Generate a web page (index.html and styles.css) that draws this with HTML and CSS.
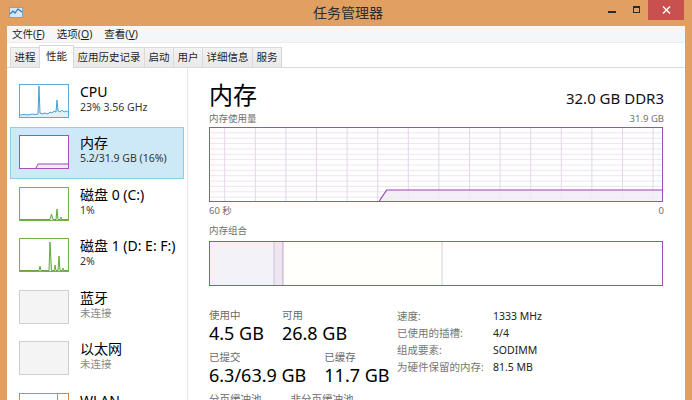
FILE: index.html
```html
<!DOCTYPE html>
<html lang="zh-CN">
<head>
    <meta charset="UTF-8">
    <title>任务管理器</title>
    <link rel="stylesheet" href="styles.css">
</head>
<body>
<div class="window">
    <div class="titlebar">
        <svg class="app-icon" width="14" height="11" viewBox="0 0 14 11">
            <rect x="0.5" y="0.5" width="13" height="10" fill="#d6e8f4" stroke="#7aa6c8"/>
            <polyline points="1,7 4,4 6,6 9,2 13,5" fill="none" stroke="#2f77b0" stroke-width="1.2"/>
        </svg>
        <div class="title">任务管理器</div>
        <div class="caption">
            <span class="cap-btn"><i class="min"></i></span>
            <span class="cap-btn"><i class="max"></i></span>
            <span class="cap-btn close">
                <svg width="9" height="8" viewBox="0 0 9 8"><path d="M1 0.5 L8 7.5 M8 0.5 L1 7.5" stroke="#fff" stroke-width="1.4"/></svg>
            </span>
        </div>
    </div>

    <div class="client">
        <div class="menubar">
            <span>文件(<u>F</u>)</span>
            <span>选项(<u>O</u>)</span>
            <span>查看(<u>V</u>)</span>
        </div>
        <div class="tabs">
            <span class="tab">进程</span>
            <span class="tab active">性能</span>
            <span class="tab">应用历史记录</span>
            <span class="tab">启动</span>
            <span class="tab">用户</span>
            <span class="tab">详细信息</span>
            <span class="tab">服务</span>
        </div>

        <div class="main">
            <!-- 左侧资源列表 -->
            <div class="sidebar">
                <div class="item">
                    <div class="thumb cpu">
                        <svg width="48" height="32" viewBox="0 0 48 32">
                            <polygon points="0,30 4,29.5 8,30 12,29 16,29.5 18,29 19,1 20,28 22,29 25,28 28,29 30,27 32,28 34,26 36,27 37,15 38,26 40,27 42,25 44,27 46,26 48,27 48,32 0,32" fill="#e4f0f8"/>
                            <polyline points="0,30 4,29.5 8,30 12,29 16,29.5 18,29 19,1 20,28 22,29 25,28 28,29 30,27 32,28 34,26 36,27 37,15 38,26 40,27 42,25 44,27 46,26 48,27" fill="none" stroke="#4a9fd4" stroke-width="1"/>
                        </svg>
                    </div>
                    <div class="info">
                        <div class="name">CPU</div>
                        <div class="sub">23% 3.56 GHz</div>
                    </div>
                </div>
                <div class="item selected">
                    <div class="thumb mem">
                        <svg width="48" height="32" viewBox="0 0 48 32">
                            <polygon points="16,32 18,28 48,28 48,32" fill="#f3e9f6"/>
                            <polyline points="16,32 18,28 48,28" fill="none" stroke="#9b45b5" stroke-width="1"/>
                        </svg>
                    </div>
                    <div class="info">
                        <div class="name">内存</div>
                        <div class="sub">5.2/31.9 GB (16%)</div>
                    </div>
                </div>
                <div class="item">
                    <div class="thumb disk">
                        <svg width="48" height="32" viewBox="0 0 48 32">
                            <polygon points="0,32 30,32 31.5,26 33,32 36,32 37,21 38,32 40.5,32 41,29 41.5,32" fill="#e6f2dc"/>
                            <polyline points="0,31.5 30,31.5 31.5,26 33,31.5 36,31.5 37,21 38,31.5 40.5,31.5 41,29 41.5,31.5 48,31.5" fill="none" stroke="#62a83a" stroke-width="1"/>
                        </svg>
                    </div>
                    <div class="info">
                        <div class="name">磁盘 0 (C:)</div>
                        <div class="sub">1%</div>
                    </div>
                </div>
                <div class="item">
                    <div class="thumb disk">
                        <svg width="48" height="32" viewBox="0 0 48 32">
                            <polygon points="0,32 19,32 20,27 21,32 29,32 30,3 31.5,32 34.5,32 35,26 36,32 38,32 39,17 40,32 42.5,32 43,29 43.5,32" fill="#e6f2dc"/>
                            <polyline points="0,31.5 19,31.5 20,27 21,31.5 29,31.5 30,3 31.5,31.5 34.5,31.5 35,26 36,31.5 38,31.5 39,17 40,31.5 42.5,31.5 43,29 43.5,31.5 48,31.5" fill="none" stroke="#62a83a" stroke-width="1"/>
                        </svg>
                    </div>
                    <div class="info">
                        <div class="name">磁盘 1 (D: E: F:)</div>
                        <div class="sub">2%</div>
                    </div>
                </div>
                <div class="item">
                    <div class="thumb idle"></div>
                    <div class="info">
                        <div class="name">蓝牙</div>
                        <div class="sub off">未连接</div>
                    </div>
                </div>
                <div class="item">
                    <div class="thumb idle"></div>
                    <div class="info">
                        <div class="name">以太网</div>
                        <div class="sub off">未连接</div>
                    </div>
                </div>
                <div class="item">
                    <div class="thumb wlan"><i></i></div>
                    <div class="info">
                        <div class="name">WLAN</div>
                    </div>
                </div>
            </div>

            <!-- 右侧详情 -->
            <div class="detail">
                <div class="head">
                    <h1>内存</h1>
                    <div class="spec">32.0 GB DDR3</div>
                </div>
                <div class="cap">
                    <span>内存使用量</span>
                    <span>31.9 GB</span>
                </div>
                <svg class="graph" width="454" height="75" viewBox="0 0 454 75">
                    <g stroke="#efe3f2" stroke-width="1">
                        <line x1="0" y1="5.86" x2="454" y2="5.86"/>
                        <line x1="0" y1="11.2" x2="454" y2="11.2"/>
                        <line x1="0" y1="16.57" x2="454" y2="16.57"/>
                        <line x1="0" y1="21.93" x2="454" y2="21.93"/>
                        <line x1="0" y1="27.29" x2="454" y2="27.29"/>
                        <line x1="0" y1="32.64" x2="454" y2="32.64"/>
                        <line x1="0" y1="38" x2="454" y2="38"/>
                        <line x1="0" y1="43.36" x2="454" y2="43.36"/>
                        <line x1="0" y1="48.71" x2="454" y2="48.71"/>
                        <line x1="0" y1="54.07" x2="454" y2="54.07"/>
                        <line x1="0" y1="59.43" x2="454" y2="59.43"/>
                        <line x1="0" y1="64.79" x2="454" y2="64.79"/>
                        <line x1="0" y1="70.14" x2="454" y2="70.14"/>
                    </g>
                    <g stroke="#e4d5ea" stroke-width="1">
                        <line x1="15.7" y1="0" x2="15.7" y2="75"/>
                        <line x1="46.3" y1="0" x2="46.3" y2="75"/>
                        <line x1="76.9" y1="0" x2="76.9" y2="75"/>
                        <line x1="107.5" y1="0" x2="107.5" y2="75"/>
                        <line x1="138.1" y1="0" x2="138.1" y2="75"/>
                        <line x1="168.7" y1="0" x2="168.7" y2="75"/>
                        <line x1="199.3" y1="0" x2="199.3" y2="75"/>
                        <line x1="229.9" y1="0" x2="229.9" y2="75"/>
                        <line x1="260.5" y1="0" x2="260.5" y2="75"/>
                        <line x1="291.1" y1="0" x2="291.1" y2="75"/>
                        <line x1="321.7" y1="0" x2="321.7" y2="75"/>
                        <line x1="352.3" y1="0" x2="352.3" y2="75"/>
                        <line x1="382.9" y1="0" x2="382.9" y2="75"/>
                        <line x1="413.5" y1="0" x2="413.5" y2="75"/>
                        <line x1="444.1" y1="0" x2="444.1" y2="75"/>
                    </g>
                    <polygon points="170,74.5 177.7,63 453.5,63 453.5,74.5" fill="#f2ebf5" fill-opacity="0.85"/>
                    <polyline points="170,74.5 177.7,63 453.5,63" fill="none" stroke="#9445ad" stroke-width="1.2"/>
                    <rect x="0.5" y="0.5" width="453" height="74" fill="none" stroke="#9b50b4" stroke-width="1"/>
                </svg>
                <div class="cap axis">
                    <span>60 秒</span>
                    <span>0</span>
                </div>
                <div class="cap combo-cap">
                    <span>内存组合</span>
                </div>
                <svg class="combo" width="454" height="45" viewBox="0 0 454 45">
                    <rect x="0" y="0" width="65" height="45" fill="#f3f2f8"/>
                    <rect x="65" y="0" width="9" height="45" fill="#ede5f1"/>
                    <rect x="74" y="0" width="159" height="45" fill="#fffffb"/>
                    <line x1="65" y1="0" x2="65" y2="45" stroke="#cbc2d3"/>
                    <line x1="74" y1="0" x2="74" y2="45" stroke="#c2a3cf"/>
                    <line x1="233" y1="0" x2="233" y2="45" stroke="#d2d2d2"/>
                    <rect x="0.5" y="0.5" width="453" height="44" fill="none" stroke="#9b50b4" stroke-width="1"/>
                </svg>

                <div class="stats">
                    <div class="figures">
                        <div class="fig-row">
                            <div class="fig"><div class="label">使用中</div><div class="value">4.5 GB</div></div>
                            <div class="fig"><div class="label">可用</div><div class="value">26.8 GB</div></div>
                        </div>
                        <div class="fig-row">
                            <div class="fig"><div class="label">已提交</div><div class="value">6.3/63.9 GB</div></div>
                            <div class="fig"><div class="label">已缓存</div><div class="value">11.7 GB</div></div>
                        </div>
                        <div class="fig-row">
                            <div class="fig"><div class="label">分页缓冲池</div><div class="value">423 MB</div></div>
                            <div class="fig"><div class="label">非分页缓冲池</div><div class="value">143 MB</div></div>
                        </div>
                    </div>
                    <div class="props">
                        <span class="k">速度:</span><span class="v">1333 MHz</span>
                        <span class="k">已使用的插槽:</span><span class="v">4/4</span>
                        <span class="k">组成要素:</span><span class="v">SODIMM</span>
                        <span class="k">为硬件保留的内存:</span><span class="v">81.5 MB</span>
                    </div>
                </div>
            </div>
        </div>
    </div>
</div>
</body>
</html>
```

FILE: styles.css
```css
html, body {
    margin: 0;
    height: 100%;
    overflow: hidden;
}
body {
    font-family: "Noto Sans", "Noto Sans CJK SC", sans-serif;
    color: #000;
    background: #e1a062;
}
.window {
    width: 692px;
    height: 400px;
    background: #e1a062;
    display: flex;
    flex-direction: column;
    overflow: hidden;
}

/* 标题栏 */
.titlebar {
    height: 26px;
    display: grid;
    grid-template-columns: 1fr auto 1fr;
    align-items: start;
    flex: none;
}
.app-icon { margin: 7px 0 0 9px; }
.title {
    font-size: 14px;
    line-height: 26px;
    color: #2d2d2d;
    padding-left: 4px;
}
.caption {
    justify-self: end;
    display: flex;
    margin-right: 8px;
}
.cap-btn {
    width: 24px;
    height: 20px;
    display: flex;
    align-items: center;
    justify-content: center;
}
.cap-btn .min {
    width: 8px;
    height: 2px;
    background: #2a2a2a;
    margin-top: 3px;
}
.cap-btn .max {
    width: 5px;
    height: 4px;
    border: 1px solid #2a2a2a;
    border-top-width: 2px;
    margin-top: -2px;
}
.cap-btn.close {
    width: 36px;
    background: #c8504f;
}

/* 客户区 */
.client {
    flex: 1;
    margin: 0 7px;
    background: #fff;
    display: flex;
    flex-direction: column;
    min-height: 0;
}
.menubar {
    height: 16px;
    background: #f5f6f7;
    border-bottom: 1px solid #e9ebee;
    display: flex;
    gap: 12px;
    padding-left: 5px;
    font-size: 10.5px;
    line-height: 16px;
    color: #1e1e1e;
}
.menubar u { text-decoration-thickness: 1px; text-underline-offset: 1px; }
.tabs {
    height: 24px;
    border-bottom: 1px solid #d9d9d9;
    display: flex;
    align-items: flex-end;
    padding-left: 3px;
}
.tab {
    height: 19px;
    padding: 0 3.5px;
    margin-left: -1px;
    border: 1px solid #d9d9d9;
    border-bottom: none;
    background: linear-gradient(#f3f3f3, #e9e9e9);
    font-size: 10.5px;
    line-height: 19px;
    color: #1e1e1e;
}
.tab:first-child { margin-left: 0; }
.tab.active {
    height: 22px;
    padding: 0 6px;
    background: #fff;
    margin-bottom: -1px;
    line-height: 21px;
    position: relative;
    z-index: 1;
}

.main {
    flex: 1;
    display: flex;
    min-height: 0;
}

/* 左侧列表 */
.sidebar {
    width: 181px;
    flex: none;
    box-sizing: border-box;
    border-right: 1px solid #e6e6e6;
    padding: 7.5px 0 0 3px;
}
.item {
    width: 174px;
    height: 51.5px;
    box-sizing: border-box;
    border: 1px solid transparent;
    padding: 7px 8px;
    display: flex;
    gap: 11px;
}
.item.selected {
    background: #cde8f6;
    border-color: #8fcbeb;
}
.thumb {
    width: 50px;
    height: 34px;
    box-sizing: border-box;
    border: 1px solid #ccc;
    background: #fff;
    flex: none;
}
.thumb svg { display: block; }
.thumb.cpu { border-color: #5ea9d8; }
.thumb.mem { border-color: #a452bb; }
.thumb.disk { border-color: #74b147; }
.thumb.idle { background: #f4f4f4; border-color: #cfcfcf; }
.thumb.wlan { border-color: #c98a52; position: relative; }
.thumb.wlan i {
    position: absolute;
    left: 37px;
    top: 0;
    bottom: 0;
    border-left: 1px solid #c98a52;
}
.name {
    font-size: 14px;
    line-height: 16px;
    white-space: nowrap;
}
.sub {
    font-size: 10.5px;
    line-height: 15px;
    color: #333;
    white-space: nowrap;
}
.sub.off { color: #8a8a8a; }

/* 右侧详情 */
.detail {
    flex: 1;
    padding: 13px 21px 0 21px;
}
.head {
    display: flex;
    justify-content: space-between;
    align-items: baseline;
}
.head h1 {
    margin: 0;
    font-size: 24px;
    line-height: 28px;
    font-weight: normal;
}
.spec {
    font-size: 15px;
    line-height: 20px;
    color: #111;
}
.cap {
    display: flex;
    justify-content: space-between;
    font-size: 9.5px;
    line-height: 12px;
    color: #707070;
    margin: 4px 0 2px;
}
.cap.axis { margin: 3px 0 0; }
.cap.combo-cap { margin: 8px 0 4px; }
.graph, .combo { display: block; }

.stats {
    display: flex;
    align-items: flex-start;
    margin-top: 23px;
}
.figures {
    width: 188px;
    flex: none;
}
.fig-row {
    display: flex;
    gap: 18px;
    margin-bottom: 8px;
}
.fig .label {
    font-size: 10.5px;
    line-height: 13px;
    color: #6a6a6a;
    white-space: nowrap;
}
.fig .value {
    font-size: 18px;
    line-height: 20px;
    margin-top: 1px;
    white-space: nowrap;
}
.props {
    display: grid;
    grid-template-columns: 96px auto;
    align-content: start;
    margin-top: -1px;
    font-size: 10.5px;
    line-height: 17px;
}
.props .k { color: #757575; white-space: nowrap; }
.props .v { color: #222; }
```
